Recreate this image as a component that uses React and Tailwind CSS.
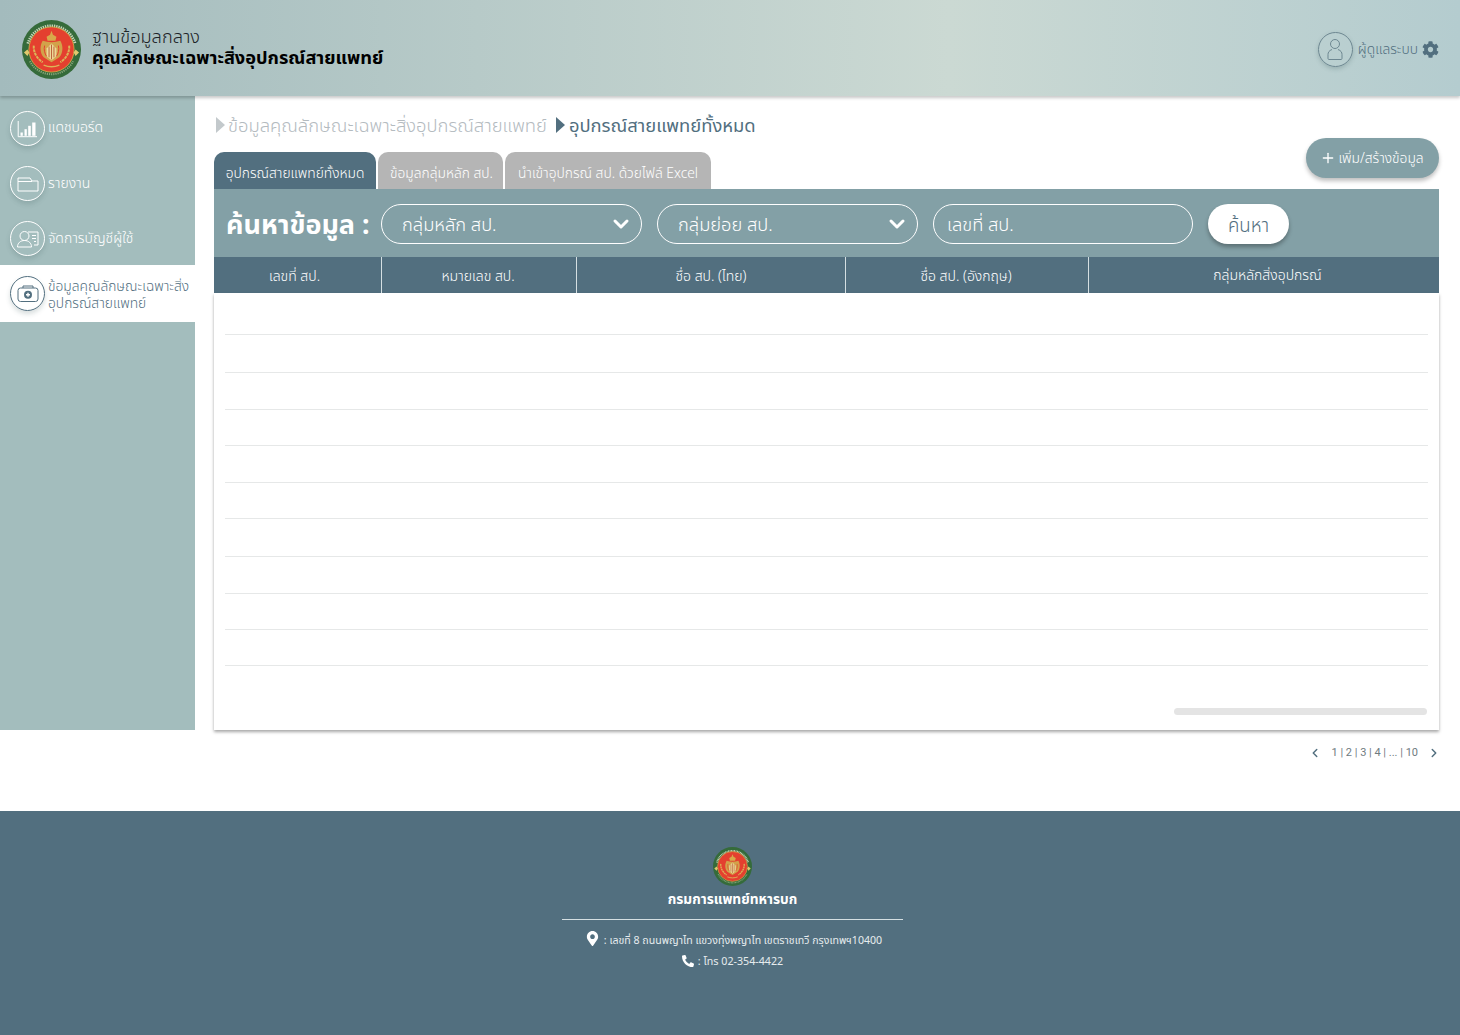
import React from 'react';
import { ChevronDown, ChevronLeft, ChevronRight, Plus } from 'lucide-react';
import { FaCog, FaMapMarkerAlt, FaPhoneAlt } from 'react-icons/fa';

const columns = [
    { label: 'เลขที่ สป.', width: 'w-[167px]', pad: 'pr-[6px]' },
    { label: 'หมายเลข สป.', width: 'w-[195px]', pad: 'pr-[2px]' },
    { label: 'ชื่อ สป. (ไทย)', width: 'w-[269px]', pad: '' },
    { label: 'ชื่อ สป. (อังกฤษ)', width: 'w-[243px]', pad: 'pr-[2px]' },
    { label: 'กลุ่มหลักสิ่งอุปกรณ์', width: 'flex-1', pad: 'pl-[7px] pb-[2px]' },
];

const rows = ['h-[42px]', 'h-[38px]', 'h-[37px]', 'h-[36px]', 'h-[37px]', 'h-[36px]', 'h-[38px]', 'h-[37px]', 'h-[36px]', 'h-[36px]'];

function Logo({ size, className = '' }) {
    return (
        <svg width={size} height={size} viewBox="0 0 60 60" className={`shrink-0 ${className}`}>
            <circle cx="30" cy="30" r="30" fill="#356b3a" />
            <path d="M6 24A25 25 0 0 1 54 24" fill="none" stroke="#e8ecd8" strokeWidth="3" strokeDasharray="1.4 0.9" opacity="0.8" />
            <path d="M8 42A25 25 0 0 0 52 42" fill="none" stroke="#c3d0a8" strokeWidth="2" strokeDasharray="1.2 1" opacity="0.6" />
            <circle cx="30" cy="30" r="23" fill="#e4402f" stroke="#d9b44a" strokeWidth="0.8" />
            <path d="M30 11l1.500 4 3.500 2-1 4h-8l-1-4 3.500-2z" fill="#d8a94a" />
            <path d="M21 21c-3 5-3 12 1 17l8 5 8-5c4-5 4-12 1-17-3 1-6 1.500-9 1.500s-6-.5-9-1.500z" fill="#d2a24a" />
            <path d="M30 24l5 5v8l-5 4-5-4v-8z" fill="#eed898" />
            <path d="M27.500 27v11M30 25v15M32.500 27v11" stroke="#b5562e" strokeWidth="0.9" />
            <path d="M23 26c-1 4 0 8 2 11M37 26c1 4 0 8-2 11" fill="none" stroke="#e4402f" strokeWidth="1" />
            <path d="M12 26c-.5 7 3 13 9 17M48 26c.5 7-3 13-9 17" fill="none" stroke="#dcb458" strokeWidth="2" strokeDasharray="3 0.8" />
            <path d="M22 46c5 2 11 2 16 0" fill="none" stroke="#dcb458" strokeWidth="1.400" />
            <path d="M2 33l3.500-3 2 3-2 3.500zM58 33l-3.500-3-2 3 2 3.500z" fill="#e0c96e" />
        </svg>
    );
}

function NavIcon({ active, children }) {
    return (
        <div className={`w-[35px] h-[35px] rounded-full border flex items-center justify-center shrink-0 shadow-[0_3px_5px_rgba(60,90,90,0.2)] ${active ? 'border-[#526f7f] text-[#526f7f]' : 'border-white text-white'}`}>
            <svg width="24" height="24" viewBox="0 0 24 24" fill="none" stroke="currentColor" strokeWidth="1">
                {children}
            </svg>
        </div>
    );
}

function SelectBox({ label, width }) {
    return (
        <div className={`${width} h-10 rounded-full border border-white flex items-center justify-between pl-[20px] pr-[8px] text-white text-[18.300px] font-light`}>
            <span>{label}</span>
            <ChevronDown size={24} strokeWidth={3} />
        </div>
    );
}

export default function App() {
    return (
        <div className="w-[1460px] min-h-[1035px] bg-white flex flex-col font-['Noto_Sans','Noto_Sans_Thai',sans-serif]">
            {/* Header */}
            <header className="relative z-10 h-[96px] flex items-center justify-between pl-[22px] pr-[21px] bg-gradient-to-r from-[#a3bbbd] via-[#cbd9d3] via-65% to-[#b4cccf] shadow-[0_2px_3px_rgba(0,0,0,0.22)]">
                <div className="flex items-center gap-[11px] -mt-[2px]">
                    <Logo size={59} className="mt-[5px]" />
                    <div className="text-[18.200px] leading-[21px] text-[#1c2327]">
                        <div className="font-light">ฐานข้อมูลกลาง</div>
                        <div className="font-bold text-black">คุณลักษณะเฉพาะสิ่งอุปกรณ์สายแพทย์</div>
                    </div>
                </div>
                <div className="flex items-center text-[#526f7f] mt-[2px]">
                    <div className="w-[35px] h-[35px] rounded-full border border-[#6d8791] flex items-center justify-center shadow-[0_2px_4px_rgba(60,90,90,0.25)]">
                        <svg width="22" height="24" viewBox="0 0 22 24" fill="none" stroke="#6d8791" strokeWidth="1">
                            <circle cx="11" cy="7" r="4.500" />
                            <path d="M8 12.500c-3 1-4 3-4 5v4c0 .6.4 1 1 1h12c.6 0 1-.4 1-1v-4c0-2-1-4-4-5" />
                        </svg>
                    </div>
                    <span className="ml-[5px] text-[13.800px] font-light">ผู้ดูแลระบบ</span>
                    <FaCog size={17} className="ml-[4px]" />
                </div>
            </header>

            <div className="flex">
                {/* Sidebar */}
                <aside className="w-[195px] h-[634px] bg-[#a3bdbd] shrink-0">
                    <div className="h-[169px] pl-[10px] pt-[15px] flex flex-col text-white text-[14px] font-light">
                        <div className="flex items-center gap-[3px] h-[35px]">
                            <NavIcon>
                                <path d="M2.200 4v15.700H21" />
                                <g fill="currentColor" stroke="none">
                                    <rect x="4.500" y="15.500" width="2.300" height="3.300" />
                                    <rect x="8.500" y="12.200" width="2.300" height="6.600" />
                                    <rect x="12.200" y="8.800" width="2.600" height="10" />
                                    <rect x="16.200" y="5.500" width="3.300" height="13.300" />
                                </g>
                            </NavIcon>
                            <span className="-mt-[5px]">แดชบอร์ด</span>
                        </div>
                        <div className="flex items-center gap-[3px] h-[35px] mt-[20px]">
                            <NavIcon>
                                <path d="M2 19V6h12l2 3h6v10zM2 9.500h14" />
                            </NavIcon>
                            <span className="-mt-[2px]">รายงาน</span>
                        </div>
                        <div className="flex items-center gap-[3px] h-[35px] mt-[20px]">
                            <NavIcon>
                                <circle cx="8.500" cy="9" r="4.500" />
                                <path d="M1.500 20c0-4 3-6.500 7-6.500s7 2.500 7 6.500zM12 5h10v13h-4M16 8.500h4M16 11.500h4M18 14.500h2" />
                            </NavIcon>
                            <span className="-mt-[2px]">จัดการบัญชีผู้ใช้</span>
                        </div>
                    </div>
                    <div className="h-[57px] bg-white flex items-center pl-[10px] gap-[3px] text-[#526f7f] text-[13.800px] leading-[17px] font-light">
                        <NavIcon active>
                            <rect x="2" y="6" width="20" height="13.500" rx="2.500" />
                            <path d="M7 6V4h10v2" />
                            <circle cx="12" cy="12.700" r="4" fill="currentColor" stroke="none" />
                            <path d="M12 10.700v4M10 12.700h4" stroke="#fff" strokeWidth="1.400" />
                        </NavIcon>
                        <div>
                            <div>ข้อมูลคุณลักษณะเฉพาะสิ่ง</div>
                            <div>อุปกรณ์สายแพทย์</div>
                        </div>
                    </div>
                </aside>

                {/* Main */}
                <main className="flex-1 pl-[19px] pr-[21px]">
                    <div className="h-[56px] flex items-center pt-[1px] text-[18.400px] font-light">
                        <span className="w-0 h-0 border-y-[8px] border-y-transparent border-l-[9px] border-l-[#c3c9cc] ml-[2px] mr-[3px]" />
                        <span className="text-[#b4bbbf]">ข้อมูลคุณลักษณะเฉพาะสิ่งอุปกรณ์สายแพทย์</span>
                        <span className="w-0 h-0 border-y-[8px] border-y-transparent border-l-[9px] border-l-[#526f7f] ml-[9px] mr-[4px]" />
                        <span className="text-[#526f7f] font-normal">อุปกรณ์สายแพทย์ทั้งหมด</span>
                    </div>

                    <div className="relative h-[37px] flex items-end gap-[2px] text-[13.800px] font-light text-white">
                        <div className="h-[37px] w-[162px] rounded-t-[10px] bg-[#526f7f] flex items-center justify-center pt-[5px]">อุปกรณ์สายแพทย์ทั้งหมด</div>
                        <div className="h-[37px] w-[125px] rounded-t-[10px] bg-[#b5b5b5] flex items-center justify-center pt-[5px] pl-[2px]">ข้อมูลกลุ่มหลัก สป.</div>
                        <div className="h-[37px] w-[206px] rounded-t-[10px] bg-[#b5b5b5] flex items-center justify-center pt-[5px]">นำเข้าอุปกรณ์ สป. ด้วยไฟล์ Excel</div>
                        <button className="absolute right-0 -top-[14px] h-10 w-[133px] rounded-full bg-[#83a0a6] text-white flex items-center justify-center gap-[2px] pr-[1px] shadow-[0_3px_4px_rgba(0,0,0,0.25)]">
                            <Plus size={16} strokeWidth={2} />
                            <span>เพิ่ม/สร้างข้อมูล</span>
                        </button>
                    </div>

                    <div className="h-[68px] bg-[#83a0a6] flex items-center pl-[12px] pt-[2px]">
                        <span className="w-[155px] text-white text-[27px] font-bold whitespace-nowrap">ค้นหาข้อมูล :</span>
                        <SelectBox label="กลุ่มหลัก สป." width="w-[261px]" />
                        <div className="w-[15px]" />
                        <SelectBox label="กลุ่มย่อย สป." width="w-[261px]" />
                        <div className="w-[15px]" />
                        <div className="w-[260px] h-10 rounded-full border border-white flex items-center pl-[13px] text-white text-[18.300px] font-light">เลขที่ สป.</div>
                        <button className="ml-[15px] w-[81px] h-10 rounded-full bg-white text-[#526f7f] text-[18.700px] font-light pt-[2px] shadow-[0_3px_4px_rgba(0,0,0,0.3)]">ค้นหา</button>
                    </div>

                    <div className="h-[36px] bg-[#526f7f] flex text-white text-[14px] font-light">
                        {columns.map((col, i) => (
                            <div key={col.label} className={`${col.width} ${col.pad} flex items-center justify-center ${i > 0 ? 'border-l border-[#d5dfe2]' : ''}`}>
                                {col.label}
                            </div>
                        ))}
                    </div>

                    <div className="h-[437px] bg-white px-[11px] flex flex-col shadow-[0_2px_3px_rgba(0,0,0,0.35)]">
                        {rows.map((h, i) => (
                            <div key={i} className={`${h} shrink-0 border-b border-[#e6e8e8]`} />
                        ))}
                        <div className="flex justify-end mt-[42px] pr-[1px]">
                            <div className="w-[253px] h-[7px] rounded-full bg-[#e4e4e4]" />
                        </div>
                    </div>

                    <div className="h-[81px] flex justify-end items-start pt-[15px] text-[11px] text-[#6f7b80]">
                        <div className="flex items-center h-[16px]">
                            <ChevronLeft size={14} strokeWidth={2.500} className="text-[#526f7f]" />
                            <span className="ml-[9px] mr-[9px] font-['Roboto',sans-serif]">1 | 2 | 3 | 4 | ... | 10</span>
                            <ChevronRight size={14} strokeWidth={2.500} className="text-[#526f7f] mr-[-2px]" />
                        </div>
                    </div>
                </main>
            </div>

            {/* Footer */}
            <footer className="h-[224px] bg-[#526f7f] flex flex-col items-center text-white pl-[5px]">
                <div className="mt-[36px]">
                    <Logo size={39} />
                </div>
                <div className="mt-[1px] text-[13.700px] font-bold leading-[24px]">กรมการแพทย์ทหารบก</div>
                <div className="w-[341px] h-px bg-[#d5dfe2] mt-[8px]" />
                <div className="mt-[10px] flex items-center text-[10.600px] text-[#e6ecee] leading-[20px] pl-[2px]">
                    <FaMapMarkerAlt size={15} className="mr-[4px] -mt-[4px] text-white" />
                    <span>: เลขที่ 8 ถนนพญาไท แขวงทุ่งพญาไท เขตราชเทวี กรุงเทพฯ10400</span>
                </div>
                <div className="mt-[1px] flex items-center text-[10.700px] text-[#e6ecee] leading-[20px]">
                    <FaPhoneAlt size={12} className="mr-[4px] text-white" />
                    <span>: โทร 02-354-4422</span>
                </div>
            </footer>
        </div>
    );
}
